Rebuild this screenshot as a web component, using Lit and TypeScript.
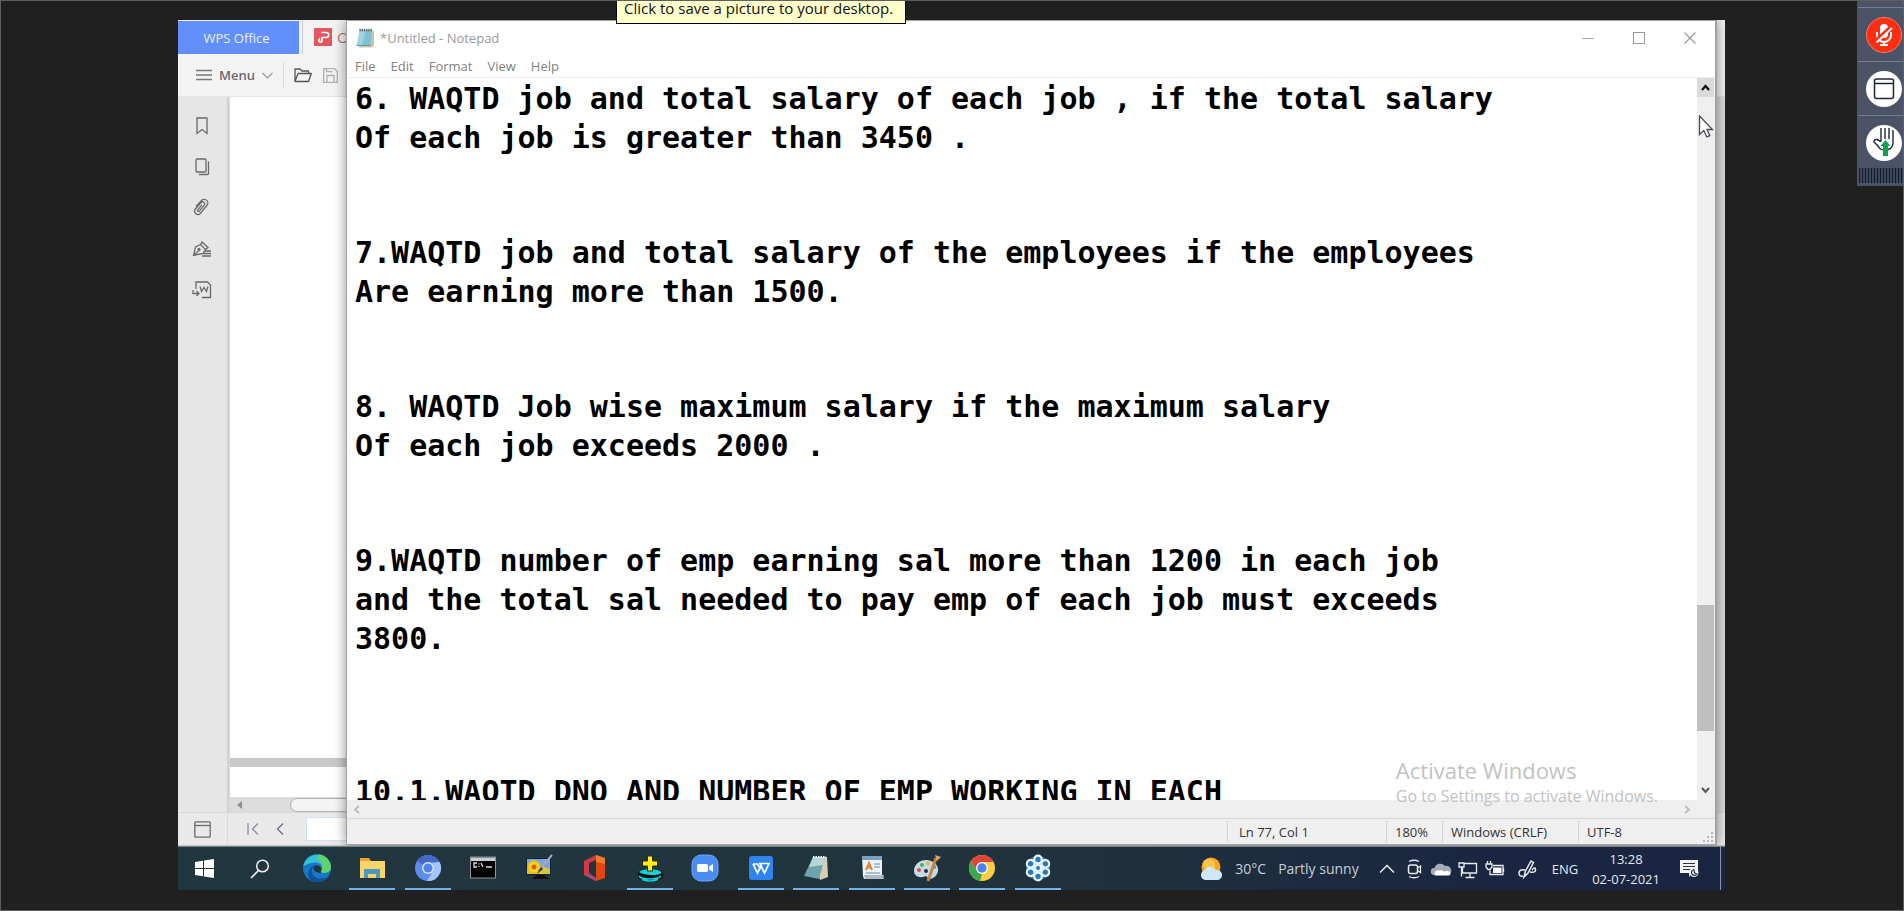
import { LitElement, html, css, svg } from "lit";
import { customElement } from "lit/decorators.js";
import { classMap } from "lit/directives/class-map.js";

const uiFont = css`"Segoe UI", "Open Sans", "Noto Sans", sans-serif`;

const reset = css`
  * { box-sizing: border-box; }
  button { border: 0; padding: 0; background: none; font: inherit; color: inherit; display: flex; align-items: center; justify-content: center; flex: none; }
  svg { display: block; flex: none; }
  :host { font-family: ${uiFont}; }
`;

@customElement("wps-window")
class WpsWindow extends LitElement {
  static styles = [reset, css`
    :host { display: flex; flex-direction: column; height: 100%; background: #fff; overflow: hidden; font-size: 13px; color: #555; }
    .tabs { display: flex; height: 34px; background: #f0f2f8; flex: none; }
    .home { width: 121px; height: 33px; margin-top: 1px; padding-right: 4px; background: #628ffb; color: #eaf0ff; font-size: 13px; }
    .tab { display: flex; align-items: center; gap: 5px; margin-left: 3px; padding-left: 11px; border-left: 1px solid #c8ccdc; flex: 1; justify-content: flex-start; color: #b27480; font-size: 15px; background: #f3f3f3; }
    .tools { display: flex; align-items: center; height: 43px; background: #f3f3f3; flex: none; border-bottom: 1px solid #e4e4e4; padding-left: 18px; }
    .menu { gap: 7px; font-size: 13px; font-weight: 600; color: #6a6a6e; }
    .rule { width: 1px; height: 27px; background: #dadada; margin: 0 10px; }
    .tool { margin-right: 11px; }
    .body { display: flex; flex: 1; min-height: 0; background: #dcdcdc; }
    .side { width: 51px; background: #e6e6e6; border-right: 2px solid #d2d2d2; display: flex; flex-direction: column; align-items: center; gap: 21px; padding: 19px 2px 0 0; flex: none; }
    .main { flex: 1; display: flex; flex-direction: column; min-width: 0; padding: 0 13px 0 1px; }
    .page { background: #fff; flex: 1; }
    .gap { height: 9px; background: #c9c9c9; flex: none; }
    .next { height: 30px; background: #fff; flex: none; }
    .bar { height: 15px; background: #dcdcdc; display: flex; align-items: center; padding-left: 7px; gap: 48px; flex: none; }
    .thumb { height: 14px; width: 60%; border-radius: 7px; background: #f4f4f4; border: 1px solid #b2b2b2; }
    .foot { height: 34px; background: #e9e9e9; border-top: 1px solid #d9d9d9; border-bottom: 1px solid #c4c4c4; display: flex; align-items: center; flex: none; }
    .panel { width: 50px; height: 100%; border-right: 1px solid #d9d9d9; }
    .first { margin: 0 17px 0 19px; }
    .num { margin-left: 22px; width: 120px; height: 24px; border: 1px solid #cfe0f4; background: #fff; }
  `];

  render() {
    const line = (d: unknown) => svg`<g fill="none" stroke="#6a6a6a" stroke-width="1.3">${d}</g>`;
    return html`
      <div class="tabs">
        <button class="home">WPS Office</button>
        <button class="tab">
          <svg width="18" height="18" viewBox="0 0 18 18"><rect width="18" height="18" rx="1" fill="#e4565f"/><path d="M5 13.500h3V9.500h4.200a2.500 2.500 0 0 0 0-5H7.500M8 13.500a1.800 1.800 0 1 1-1.800-2.800" fill="none" stroke="#fff" stroke-width="1.500"/></svg>
          <span>O</span>
        </button>
      </div>
      <div class="tools">
        <button class="menu">
          <svg width="16" height="12" viewBox="0 0 16 12"><path d="M0 1.500h16M0 6h16M0 10.500h16" stroke="#777" stroke-width="1.300"/></svg>
          Menu
          <svg width="11" height="7" viewBox="0 0 11 7"><path d="M.5 1l5 5 5-5" fill="none" stroke="#999" stroke-width="1.200"/></svg>
        </button>
        <span class="rule"></span>
        <button class="tool" aria-label="Open"><svg width="18" height="15" viewBox="0 0 18 15"><path d="M1 13.500V1h5l2 2h6.500v2.500M1 13.500L4 5.500h13.300L14.500 13.500z" fill="none" stroke="#555" stroke-width="1.300" stroke-linejoin="round"/></svg></button>
        <button class="tool" aria-label="Save"><svg width="15" height="15" viewBox="0 0 15 15"><path d="M.7.700h10.800l2.800 2.800v10.800H.7zM4 14V7.500h7V14M3.500.700v3h6" fill="none" stroke="#b0b0b0" stroke-width="1.300"/></svg></button>
      </div>
      <div class="body">
        <div class="side">
          <button aria-label="Bookmarks"><svg width="20" height="20" viewBox="0 0 20 20">${line(svg`<path d="M5 2h10v15.500l-5-4-5 4z"/>`)}</svg></button>
          <button aria-label="Pages"><svg width="20" height="20" viewBox="0 0 20 20">${line(svg`<rect x="4" y="2" width="10" height="13" rx="1"/><path d="M16.500 4.500v12a1 1 0 0 1-1 1H7"/>`)}</svg></button>
          <button aria-label="Attachments"><svg width="20" height="20" viewBox="0 0 20 20">${line(svg`<path d="M4 8.500l5.500-6a3.600 3.600 0 0 1 5.300 5l-6.500 8a3.400 3.400 0 0 1-5.200-4.300l6-6.700a2.100 2.100 0 0 1 3.200 2.700l-5 6a1 1 0 0 1-1.600-1.300l4.300-5"/>`)}</svg></button>
          <button aria-label="Sign"><svg width="20" height="20" viewBox="0 0 20 20">${line(svg`<path d="M1.500 16.500l2-8.500 5-2.500 5 5-2.500 4zM8.500 5.500l1.500-2.500 6 5.500-2.500 2M1.500 16.500l5-4.500M13 12h6M11.500 14.500h7.500M10 17h9"/><circle cx="7" cy="10.500" r="1"/>`)}</svg></button>
          <button aria-label="Export"><svg width="20" height="20" viewBox="0 0 20 20">${line(svg`<path d="M4 9V2h11.500l3 3v12.500H10M1 10v3.500h5.500M4.500 11l2.500 2.500-2.500 2.500M8 6.500l1.500 5 2.500-4 2.500 4 1.500-5"/>`)}</svg></button>
        </div>
        <div class="main">
          <div class="page"></div>
          <div class="gap"></div>
          <div class="next"></div>
          <div class="bar">
            <svg width="5" height="8" viewBox="0 0 5 8"><path d="M5 0v8L0 4z" fill="#8c8c8c"/></svg>
            <div class="thumb"></div>
          </div>
        </div>
      </div>
      <div class="foot">
        <button class="panel" aria-label="Panel"><svg width="17" height="17" viewBox="0 0 17 17">${line(svg`<rect x=".8" y=".8" width="15.400" height="15.400" rx="1"/><path d="M1 4.500h15"/>`)}</svg></button>
        <button class="first" aria-label="First page"><svg width="12" height="12" viewBox="0 0 12 12"><path d="M1 0v12M11 .5L5.500 6l5.500 5.500" fill="none" stroke="#8b90a0" stroke-width="1.300"/></svg></button>
        <button aria-label="Previous page"><svg width="8" height="12" viewBox="0 0 8 12"><path d="M7 .5L1.500 6 7 11.500" fill="none" stroke="#6d7388" stroke-width="1.400"/></svg></button>
        <input class="num" aria-label="Page number">
      </div>
    `;
  }
}

const paragraphs = [
  ["6. WAQTD job and total salary of each job , if the total salary", "Of each job is greater than 3450 ."],
  ["7.WAQTD job and total salary of the employees if the employees", "Are earning more than 1500."],
  ["8. WAQTD Job wise maximum salary if the maximum salary", "Of each job exceeds 2000 ."],
  ["9.WAQTD number of emp earning sal more than 1200 in each job", "and the total sal needed to pay emp of each job must exceeds", "3800."],
  ["10.1.WAQTD DNO AND NUMBER OF EMP WORKING IN EACH"],
];

@customElement("notepad-window")
class NotepadWindow extends LitElement {
  static styles = [reset, css`
    :host { display: flex; flex-direction: column; background: #fff; border: 1px solid #a2a2a2; border-right-width: 2px; box-shadow: 0 0 12px rgba(0, 0, 0, .45); }
    .title { display: flex; align-items: center; height: 34px; padding-left: 9px; font-size: 13px; color: #999; flex: none; }
    .title h1 { font: inherit; margin: 0; flex: 1; padding-left: 4px; }
    .title button { width: 51px; height: 34px; }
    .menus { display: flex; gap: 15px; padding-left: 8px; height: 22px; align-items: center; font-size: 13px; color: #808080; flex: none; }
    .mid { flex: 1; min-height: 0; display: flex; border-top: 1px solid #e8eded; }
    .text { flex: 1; min-width: 0; overflow: hidden; padding: 1px 0 0 8px; outline: none; font: bold 30px Consolas, "DejaVu Sans Mono", monospace; line-height: 39px; color: #000; }
    .text p { margin: 0 0 76px; white-space: pre; }
    .text p.long { margin-bottom: 114px; }
    .vbar { width: 18px; background: #efefef; display: flex; flex-direction: column; flex: none; padding-right: 1px; }
    .vbar button { height: 19px; }
    .up { background: #dadada; }
    .before { flex: 508; }
    .thumb { flex: 126; background: #bfbfbf; }
    .after { flex: 50; }
    .hbar { height: 18px; background: #efefef; display: flex; justify-content: space-between; align-items: center; padding: 0 24px 0 6px; flex: none; }
    .status { display: flex; height: 26px; border-top: 1px solid #d9d9d9; background: #efefef; flex: none; font-size: 13px; color: #333; }
    .status span { border-left: 1px solid #d4d4d4; margin: 2px 0; line-height: 22px; padding-left: 8px; white-space: nowrap; flex: none; }
    .status .fill { flex: 1; border: 0; }
    .pos { width: 159px; }
    .status .pos { padding-left: 11px; }
    .zoom { width: 56px; }
    .eol { width: 136px; }
    .enc { width: 125px; }
    .grip { align-self: flex-end; margin: 0 2px 2px 0; }
  `];

  render() {
    return html`
      <div class="title">
        <svg width="20" height="20" viewBox="0 0 20 20">
          <path d="M5 3h13v14l-2 2.500H3z" fill="#cfc3a2"/><path d="M3.500 2h12.500l-1.500 15.500H.5z" fill="#9fd3e0"/><path d="M10 2h6l-1.500 15.500H6z" fill="#7fc0d2"/>
          <path d="M3.500 2h13" stroke="#555" stroke-width="2.500" stroke-dasharray="1.200 1"/><path d="M.5 17.500h14" stroke="#5c9aad"/>
        </svg>
        <h1>*Untitled - Notepad</h1>
        <button aria-label="Minimize"><svg width="12" height="12" viewBox="0 0 12 12"><path d="M0 6.500h12" stroke="#aaa"/></svg></button>
        <button aria-label="Maximize"><svg width="12" height="12" viewBox="0 0 12 12"><rect x=".5" y=".5" width="11" height="11" fill="none" stroke="#999"/></svg></button>
        <button aria-label="Close"><svg width="12" height="12" viewBox="0 0 12 12"><path d="M.5.500l11 11M11.500.500l-11 11" stroke="#999" stroke-width="1.200"/></svg></button>
      </div>
      <nav class="menus">${["File", "Edit", "Format", "View", "Help"].map((m) => html`<button>${m}</button>`)}</nav>
      <div class="mid">
        <div class="text" role="textbox" aria-multiline="true" aria-label="Text editor" contenteditable="true" spellcheck="false">${paragraphs.map(
          (lines) => html`<p class=${classMap({ long: lines.length > 2 })}>${lines.map((l, i) => html`${i ? html`<br>` : ""}${l}`)}</p>`)}</div>
        <div class="vbar">
          <button class="up" aria-label="Scroll up"><svg width="9" height="7" viewBox="0 0 9 7"><path d="M1 6l3.500-4L8 6" fill="none" stroke="#111" stroke-width="2.200"/></svg></button>
          <div class="before"></div><div class="thumb"></div><div class="after"></div>
          <button aria-label="Scroll down"><svg width="9" height="7" viewBox="0 0 9 7"><path d="M1 1l3.500 4L8 1" fill="none" stroke="#555" stroke-width="2"/></svg></button>
        </div>
      </div>
      <div class="hbar">
        <button aria-label="Scroll left"><svg width="7" height="9" viewBox="0 0 7 9"><path d="M6 1L2 4.500 6 8" fill="none" stroke="#bbb" stroke-width="1.800"/></svg></button>
        <button aria-label="Scroll right"><svg width="7" height="9" viewBox="0 0 7 9"><path d="M1 1l4 3.500L1 8" fill="none" stroke="#bbb" stroke-width="1.800"/></svg></button>
      </div>
      <div class="status">
        <span class="fill"></span><span class="pos">Ln 77, Col 1</span><span class="zoom">180%</span><span class="eol">Windows (CRLF)</span><span class="enc">UTF-8</span>
        <svg class="grip" width="10" height="10" viewBox="0 0 10 10" fill="#b4b9cc"><path d="M8 0h2v2H8zM8 4h2v2H8zM8 8h2v2H8zM4 4h2v2H4zM4 8h2v2H4zM0 8h2v2H0z"/></svg>
      </div>
    `;
  }
}

const apps = [
  { name: "Edge", open: false, icon: svg`<circle cx="14" cy="14" r="14" fill="#1479c9"/><path d="M.5 12A14 14 0 0 1 28 12c.5 5-4 7.500-9 6.500-2-.5-1-2 0-3.500C20 10 15 8 11 8.500 6 9 1 12 .5 12z" fill="#33c3d4"/><path d="M16 .2A14 14 0 0 1 28 12c.5 5-4 7.500-9 6.500-2-.5-1-2 0-3.500 1.500-5-1-8-5-10z" fill="#5fd26b"/><path d="M9 17c0 6 6 10 15.500 6A14 14 0 0 1 9 27C3 23 5 13 11 12c-1.500 1.500-2 3-2 5z" fill="#10509c"/><path d="M11 12c3-2 7 0 7.500 3 0 2-1.500 2.500 0 4-5 0-9-2-7.500-7z" fill="#22353e"/>` },
  { name: "File Explorer", open: true, icon: svg`<path d="M2 4h9l2 3h13v17H2z" fill="#e9a634"/><path d="M2 7h25v17H2z" fill="#fbd568"/><path d="M6 15h16v9h-4v-4h-8v4H6z" fill="#4a98c0"/>` },
  { name: "Chromium", open: true, icon: svg`<circle cx="14" cy="14" r="13" fill="#5d8cec"/><path d="M14 1a13 13 0 0 1 11.500 7H14a6 6 0 0 0-5 3L3 7A13 13 0 0 1 14 1z" fill="#4568c8"/><path d="M25.500 8A13 13 0 0 1 13 27l6-10a6 6 0 0 0-1-8z" fill="#a6c6fb"/><circle cx="14" cy="14" r="6" fill="#dbe8ff"/><circle cx="14" cy="14" r="4.500" fill="#4d83ea"/>` },
  { name: "Command Prompt", open: false, icon: svg`<rect x="1.500" y="3" width="25" height="21" fill="#000" stroke="#8b9397"/><path d="M2 3.500h24v3.500H2z" fill="#c9cdce"/><path d="M8 9H5v4h3M10 9.500v1M10 12v1M12 9l2 4M17 13h6" fill="none" stroke="#ddd" stroke-width="1.300"/>` },
  { name: "Display", open: false, icon: svg`<rect x="1" y="4" width="25" height="17" fill="#12243c"/><rect x="2" y="5" width="23" height="15" fill="#7da4e2"/><path d="M2 16q12-6 23-1v5H2z" fill="#d8c540"/><circle cx="9" cy="13" r="6" fill="#f7d51d" stroke="#f0bb14" stroke-width="2" stroke-dasharray="2 1"/><circle cx="9" cy="13" r="2.500" fill="#d9601a"/><path d="M12 21h7l5 4H7z" fill="#111"/><path d="M27 1L16 14l-3 3" stroke="#aaa" stroke-width="2"/><path d="M16 13l-4 7 6-5z" fill="#333"/>` },
  { name: "Office", open: false, icon: svg`<path d="M4 7l12-6v5L9 9v11l7 4v3L4 21z" fill="#d33845"/><path d="M16 1l9 3v20l-9 3z" fill="#e2470e"/><path d="M16 1l9 3v6l-9-2z" fill="#f07a2a"/><path d="M4 21l5-2 7 5v3z" fill="#a74a70"/>` },
  { name: "Disk Utility", open: true, icon: svg`<path d="M2 18l6-3h13l6 3v6l-7 4H9l-7-4z" fill="#111"/><path d="M3 18c4-4 19-4 22 0s-18 4-22 0z" fill="#12cfd9"/><path d="M3 22c3 4 18 4 22 0M6 25.500q8 3 16 0" fill="none" stroke="#12cfd9" stroke-width="1.700"/><path d="M11.500 2h5v5h5v5h-5v5h-5v-5h-5V7h5z" fill="#ffef19" stroke="#332f00"/>` },
  { name: "Zoom", open: false, icon: svg`<rect x="1" y="1" width="26" height="26" rx="9" fill="#4a8cf4" stroke="#71a7f8"/><rect x="6" y="10" width="11" height="8" rx="1.500" fill="#fff"/><path d="M18 12.500l4-2.500v8l-4-2.500z" fill="#fff"/>` },
  { name: "WPS", open: true, icon: svg`<rect x="2" y="2" width="24" height="24" rx="3" fill="#2e85f0"/><path d="M6 10l4.500 9L14 12l3.500 7L22 9.500h-9l2 4M6 10h4.500l3 5" fill="none" stroke="#fff" stroke-width="1.700"/>` },
  { name: "Notepad", open: true, icon: svg`<path d="M11 3h14l1 20-8 3z" fill="#d6cfb6"/><path d="M11 3h12l-6 22-15-3z" fill="#6da3ac"/><path d="M11 3h12l-2 8L7 13z" fill="#b6d6d8"/><path d="M11 3h13" stroke="#e8f2f2" stroke-width="2" stroke-dasharray="1.500 1"/>` },
  { name: "WordPad", open: true, icon: svg`<path d="M4 2h20v20l2 3H6l-1-3z" fill="#eef2f6"/><path d="M4 2h20v4H4z" fill="#7d9ec0"/><path d="M6 21h20l-1 4H7z" fill="#aebac6"/><path d="M8 16l3-7 3 7M9 13.500h4" fill="none" stroke="#e1843b" stroke-width="2"/><path d="M16 10h6M16 13h6M8 19h14" stroke="#88aed6" stroke-width="1.500"/>` },
  { name: "Paint", open: true, icon: svg`<path d="M1 17C1 9 10 4 18 7c6 2 9 8 6 13-2 4-7 6-9 4-1-2-3-2-5-1-5 1-9-2-9-6z" fill="#c5dbe8"/><circle cx="6" cy="16" r="2" fill="#d95043"/><circle cx="9" cy="11" r="2" fill="#4eae52"/><circle cx="15" cy="9.500" r="2" fill="#e8b53d"/><circle cx="13" cy="17" r="2" fill="#24343e"/><circle cx="21" cy="13" r="2" fill="#5580d5"/><path d="M15 27l8-23" stroke="#ca853d" stroke-width="3"/><path d="M22 1l6 2-4 4z" fill="#dda16c"/>` },
  { name: "Chrome", open: true, icon: svg`<circle cx="14" cy="14" r="13" fill="#fbcd3f"/><path d="M2.700 7.500A13 13 0 0 1 25.500 8H14l-5 9z" fill="#e0453a"/><path d="M2.700 7.500L9 17l5 3-2 7A13 13 0 0 1 2.700 7.500z" fill="#3fa752"/><circle cx="14" cy="14" r="6" fill="#fff"/><circle cx="14" cy="14" r="4.700" fill="#4a84ee"/>` },
  { name: "GoToMeeting", open: true, icon: svg`<circle cx="14" cy="14" r="12" fill="#2b79b8"/><g fill="#2b79b8" stroke="#e6f5ff" stroke-width="2.200">${[0, 60, 120, 180, 240, 300].map((a) => svg`<circle cx="14" cy="5.500" r="3.800" transform="rotate(${a} 14 14)"/>`)}</g><circle cx="14" cy="14" r="4.500" fill="#e6f5ff"/><circle cx="14" cy="14" r="2" fill="#2b79b8"/>` },
];

@customElement("task-bar")
class TaskBar extends LitElement {
  static styles = [reset, css`
    :host { display: flex; height: 44px; background: linear-gradient(90deg, #21373f, #20333d 55%, #1a2641 85%); border-top: 1px solid #74828a; color: #e2e7ee; font-size: 14px; }
    .start { width: 53px; }
    .search { width: 57px; }
    .apps { display: flex; justify-content: space-between; flex: 0 1 767px; min-width: 0; margin-left: 6px; }
    .apps button { width: 46px; border-bottom: 2px solid transparent; }
    .apps button.open { border-color: #6fb3e8; }
    .tray { margin-left: auto; display: flex; align-items: center; flex: none; white-space: nowrap; }
    .weather { gap: 12px; margin-right: 17px; color: #c6ced6; }
    .icons { display: flex; align-items: center; gap: 5px; }
    .pen { margin-left: 6px; }
    .lang { margin: 0 14px 0 13px; font-size: 13px; }
    .clock { flex-direction: column; font-size: 13px; line-height: 20px; margin-right: 20px; }
    .desk { width: 5px; height: 43px; border-left: 1px solid #8a93a5; margin-left: 21px; }
  `];

  render() {
    return html`
      <button class="start" aria-label="Start"><svg width="19" height="19" viewBox="0 0 19 19" fill="#fff"><path d="M0 3l8-1.200V9H0zM9 1.600L19 0v9H9zM0 10h8v7.200L0 16zM9 10h10v9L9 17.400z"/></svg></button>
      <button class="search" aria-label="Search"><svg width="20" height="20" viewBox="0 0 20 20"><circle cx="12.500" cy="7" r="5.800" fill="none" stroke="#eee" stroke-width="1.500"/><path d="M8.500 11.500L1 19" stroke="#eee" stroke-width="1.700"/></svg></button>
      <div class="apps">${apps.map((a) => html`<button class=${classMap({ open: a.open })} aria-label=${a.name}><svg width="28" height="28" viewBox="0 0 28 28">${a.icon}</svg></button>`)}</div>
      <div class="tray">
        <button class="weather">
          <svg width="24" height="24" viewBox="0 0 24 24"><circle cx="12" cy="10" r="9.500" fill="#f6a623"/><circle cx="10" cy="8" r="6" fill="#fbc64b"/><path d="M6 23a5 5 0 0 1-1-9.500A7 7 0 0 1 17 13a5 5 0 0 1 2 10z" fill="#cfe6fa"/></svg>
          <span>30°C</span><span>Partly sunny</span>
        </button>
        <div class="icons">
          <button aria-label="Hidden icons"><svg width="22" height="22" viewBox="0 0 22 22"><path d="M4 14.500l7-7 7 7" fill="none" stroke="#e8ebf0" stroke-width="1.500"/></svg></button>
          <button aria-label="Meet now"><svg width="22" height="22" viewBox="0 0 22 22"><path d="M6 3.500q5-2.500 10 0M6 18.500q5 2.500 10 0M14.500 10l3-2v6.500l-3-2" fill="none" stroke="#e8ebf0" stroke-width="1.300"/><rect x="5.500" y="7" width="9" height="8.500" rx="2" fill="none" stroke="#e8ebf0" stroke-width="1.500"/></svg></button>
          <button aria-label="OneDrive"><svg width="22" height="22" viewBox="0 0 22 22"><path d="M4 17a3.500 3.500 0 0 1 .5-7A6 6 0 0 1 15 8a5 5 0 0 1 4 9z" fill="#a5abb4"/><path d="M5 17.500q-2-3 2-5 4-1 7 1 6-1.500 6.500 2 0 2-2 2z" fill="#fff"/></svg></button>
          <button aria-label="Network"><svg width="22" height="22" viewBox="0 0 22 22"><path d="M7.500 5.500h12v9.500H5.500V9M13 15v4M8.500 19.500h9M2 5h5v4H2zM4.500 9v9.500" fill="none" stroke="#e8ebf0" stroke-width="1.300"/></svg></button>
          <button aria-label="Battery"><svg width="22" height="22" viewBox="0 0 22 22"><path d="M9 7.500h10v9H6v-4M19.500 10v4M3.500 3v3M6.500 3v3" fill="none" stroke="#e8ebf0" stroke-width="1.300"/><path d="M9 9.500h8.500v5.500H9z" fill="#fff"/><path d="M2 6h6v3L6 11.500H4L2 9z" fill="none" stroke="#e8ebf0" stroke-width="1.300"/></svg></button>
          <button class="pen" aria-label="Ink workspace"><svg width="22" height="22" viewBox="0 0 22 22"><path d="M7 19l1.500-6L14 3l2.500 1.500L11 15zM8 12q-6-1-6 3t4 3M13 14q6 1 5.500-2.500T15 12" fill="none" stroke="#e8ebf0" stroke-width="1.500"/></svg></button>
        </div>
        <button class="lang">ENG</button>
        <button class="clock"><span>13:28</span><span>02-07-2021</span></button>
        <button aria-label="Notifications"><svg width="19" height="19" viewBox="0 0 19 19"><path d="M0 1h18v13h-6l-3 4v-4H0z" fill="#f2f4f7"/><path d="M3 4.500h12M3 7.500h12M3 10.500h7" stroke="#26344c" stroke-width="1.200"/><circle cx="14" cy="13.500" r="4.500" fill="#f2f4f7"/><path d="M14 10.500a3 3 0 1 0 3 4.500q-3 0-3-4.500" fill="none" stroke="#26344c" stroke-width="1.200"/></svg></button>
        <button class="desk" aria-label="Show desktop"></button>
      </div>
    `;
  }
}

@customElement("meeting-dock")
class MeetingDock extends LitElement {
  static styles = [reset, css`
    :host { display: block; width: 47px; height: 186px; background: #4c5366; padding: 7px 0 0 1px; }
    .slot { width: 100%; height: 54px; border-top: 1px solid #747d90; padding-left: 6px; }
    .grip { height: 15px; margin: -1px 1px 0; background: repeating-linear-gradient(90deg, #141c2c 0 1px, #3d475b 1px 3px); }
  `];

  render() {
    return html`
      <button class="slot" aria-label="Unmute"><svg width="36" height="36" viewBox="0 0 36 36"><circle cx="18" cy="18" r="17.500" fill="#ff2d12" stroke="#ff7a57"/><rect x="14" y="7" width="8" height="14" rx="4" fill="#fff"/><path d="M11 15v3a7 7 0 0 0 14 0v-3M18 25v3M14 28h8" fill="none" stroke="#fff" stroke-width="2"/><path d="M9 25L25 10" stroke="#ff2d12" stroke-width="4"/><path d="M10.500 25.500L26 11" stroke="#fff" stroke-width="1.800"/></svg></button>
      <button class="slot" aria-label="Window"><svg width="36" height="36" viewBox="0 0 36 36"><circle cx="18" cy="18" r="18" fill="#fff"/><rect x="8.500" y="8" width="19" height="19.500" rx="2" fill="none" stroke="#1e2538" stroke-width="1.500"/><path d="M9 12.500h18" stroke="#1e2538" stroke-width="1.500"/></svg></button>
      <button class="slot" aria-label="Raise hand"><svg width="36" height="36" viewBox="0 0 36 36"><circle cx="18" cy="18" r="18" fill="#fff"/><path d="M15 3v13M19 3v11M23 3v11M27 5v13q0 7-9 7-4 0-6-4l-4-4q0-3 3-2.500l4 2" fill="none" stroke="#1e2538" stroke-width="1.400"/><path d="M19.500 15l5 6h-2.500v10h-5V21h-2.500z" fill="#0ba34f"/></svg></button>
      <div class="grip"></div>
    `;
  }
}

@customElement("app-root")
class AppRoot extends LitElement {
  static styles = [reset, css`
    :host { display: block; height: 100vh; position: relative; background: #202020; border: 1px solid #5e5e5e; box-sizing: border-box; overflow: hidden; padding: 19px 178px 20px 177px; }
    .desktop { display: flex; flex-direction: column; height: 100%; }
    .work { position: relative; flex: 1; min-height: 0; overflow: hidden; }
    notepad-window { position: absolute; inset: 0 8px 1px 168px; }
    .mark { position: absolute; right: 67px; bottom: 39px; color: #c2c2c2; pointer-events: none; font-size: 16px; line-height: 22px; }
    .mark strong { display: block; font-weight: 400; font-size: 22px; line-height: 29px; }
    .tip { position: absolute; top: 0; left: 615px; padding: 0 12px 8px 7px; border: 1px solid #000; border-top: 0; background: #ffffcb; color: #111; font-size: 15px; line-height: 14px; white-space: nowrap; }
    meeting-dock { position: absolute; top: -1px; right: -1px; }
    .cursor { position: absolute; right: 9px; top: 95px; }
  `];

  render() {
    return html`
      <div class="desktop">
        <div class="work">
          <wps-window></wps-window>
          <notepad-window></notepad-window>
          <div class="mark"><strong>Activate Windows</strong>Go to Settings to activate Windows.</div>
          <svg class="cursor" width="18" height="24" viewBox="0 0 18 24"><path d="M1.500 1v18.500l4.300-4 3 6.500 3-1.300-2.800-6.200h5.500z" fill="#fff" stroke="#4a4a55" stroke-width="1.300"/></svg>
        </div>
        <task-bar></task-bar>
      </div>
      <div class="tip" role="tooltip">Click to save a picture to your desktop.</div>
      <meeting-dock></meeting-dock>
    `;
  }
}
